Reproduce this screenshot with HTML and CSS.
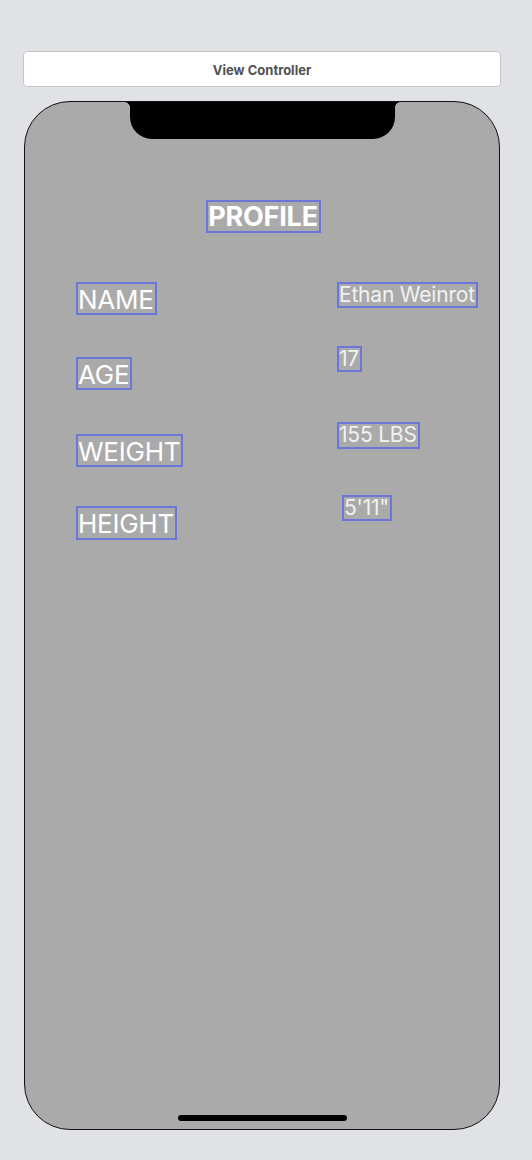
FILE: index.html
```html
<!DOCTYPE html>
<html lang="en">
<head>
    <meta charset="UTF-8">
    <meta name="viewport" content="width=device-width, initial-scale=1.0">
    <title>Main.storyboard</title>
    <link rel="stylesheet" href="styles.css">
</head>
<body>

    <div class="scene-bar">View Controller</div>

    <div class="phone">
        <div class="notch"></div>

        <div class="title tag">PROFILE</div>

        <div class="fields">
            <div class="col labels">
                <div class="tag label">NAME</div>
                <div class="tag label age">AGE</div>
                <div class="tag label weight">WEIGHT</div>
                <div class="tag label height">HEIGHT</div>
            </div>
            <div class="col values">
                <div class="tag value">Ethan Weinrot</div>
                <div class="tag value age-val">17</div>
                <div class="tag value weight-val">155 LBS</div>
                <div class="tag value height-val">5'11"</div>
            </div>
        </div>

        <div class="home-bar"></div>
    </div>

</body>
</html>
```

FILE: styles.css
```css
body {
    margin: 0;
    padding: 51px 0 0 0;
    background: #e1e2e6;
    font-family: Inter, "Noto Sans", sans-serif;
}

.scene-bar {
    margin-left: 23px;
    width: 476px;
    height: 34px;
    background: #fff;
    border: 1px solid #c6c6c8;
    border-radius: 4px;
    font-size: 13px;
    font-weight: bold;
    color: #505052;
    text-align: center;
    line-height: 36px;
}

.phone {
    margin: 14px 0 0 24px;
    width: 474px;
    height: 1027px;
    border: 1px solid #111;
    border-radius: 46px;
    background: #aaaaaa;
    display: flex;
    flex-direction: column;
    align-items: center;
}

.notch {
    position: relative;
    width: 265px;
    height: 37px;
    background: #000;
    border-radius: 0 0 22px 22px;
}

.notch::before,
.notch::after {
    content: "";
    position: absolute;
    top: 0;
    width: 5px;
    height: 5px;
}

.notch::before {
    left: -5px;
    background: radial-gradient(circle at 0 100%, transparent 4.5px, #000 5px);
}

.notch::after {
    right: -5px;
    background: radial-gradient(circle at 100% 100%, transparent 4.5px, #000 5px);
}

.tag {
    box-sizing: border-box;
    border: 2px solid #6c75d9;
    color: #fff;
    white-space: nowrap;
    padding: 0 1px 0 0;
}

.title {
    margin-top: 61px;
    margin-left: 3px;
    height: 33px;
    line-height: 30px;
    font-size: 27px;
    font-weight: bold;
    letter-spacing: -0.2px;
}

.fields {
    align-self: stretch;
    display: flex;
    margin-top: 49px;
    padding-left: 51px;
}

.col {
    display: flex;
    flex-direction: column;
    align-items: flex-start;
}

.labels {
    width: 261px;
}

.label {
    height: 33px;
    line-height: 32px;
    font-size: 26px;
    letter-spacing: -0.25px;
}

.age { margin-top: 42px; }
.weight { margin-top: 44px; }
.height { margin-top: 39px; height: 34px; }

.value {
    height: 26px;
    line-height: 22px;
    font-size: 21px;
    letter-spacing: -0.2px;
    color: #f2f2f2;
}

.age-val { margin-top: 38px; }
.weight-val { margin-top: 50px; height: 27px; }
.height-val { margin-top: 46px; margin-left: 5px; }

.home-bar {
    margin-top: auto;
    margin-bottom: 8px;
    width: 169px;
    height: 6px;
    border-radius: 3px;
    background: #000;
}
```
